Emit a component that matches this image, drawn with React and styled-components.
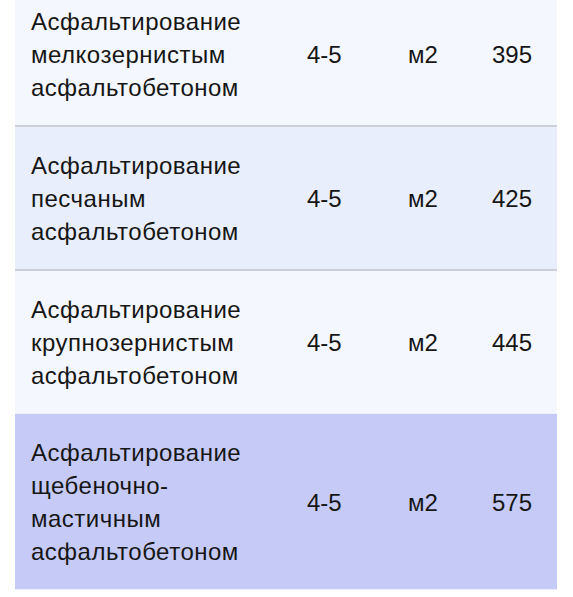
import React from 'react'
import styled, { createGlobalStyle } from 'styled-components'

const GlobalStyle = createGlobalStyle`
  html, body {
    margin: 0;
    padding: 0;
    background: #ffffff;
  }
  body {
    font-family: "Liberation Sans", Arial, Helvetica, sans-serif;
    color: #161616;
    overflow: hidden;
  }
`

const Table = styled.div`
  width: 542px;
  margin: -17px 0 0 15px;
`

const Row = styled.div`
  display: grid;
  grid-template-columns: 276px 101px 84px 81px;
  align-items: center;
  background: ${p => p.$bg};
  border-bottom: ${p => (p.$divider ? '2px solid #cdd0d8' : '1px solid #eef0f6')};
`

const Cell = styled.div`
  padding: 22px 0 21px 16px;
  font-size: 24px;
  line-height: 33px;
`

const NameCell = styled(Cell)`
  max-width: 220px;
  letter-spacing: 0.5px;
`

const rows = [
  { name: 'Асфальтирование мелкозернистым асфальтобетоном', depth: '4-5', unit: 'м2', price: 395, bg: '#f5f7fe', divider: true },
  { name: 'Асфальтирование песчаным асфальтобетоном', depth: '4-5', unit: 'м2', price: 425, bg: '#e8eefb', divider: true },
  { name: 'Асфальтирование крупнозернистым асфальтобетоном', depth: '4-5', unit: 'м2', price: 445, bg: '#f5f7fe', divider: false },
  { name: 'Асфальтирование щебеночно-мастичным асфальтобетоном', depth: '4-5', unit: 'м2', price: 575, bg: '#c5cbf6', divider: false },
]

const App = () => {
  return (
    <>
      <GlobalStyle />
      <Table>
        {rows.map((row, index) => (
          <Row key={index} $bg={row.bg} $divider={row.divider}>
            <NameCell>{row.name}</NameCell>
            <Cell>{row.depth}</Cell>
            <Cell>{row.unit}</Cell>
            <Cell>{row.price}</Cell>
          </Row>
        ))}
      </Table>
    </>
  )
}

export default App
